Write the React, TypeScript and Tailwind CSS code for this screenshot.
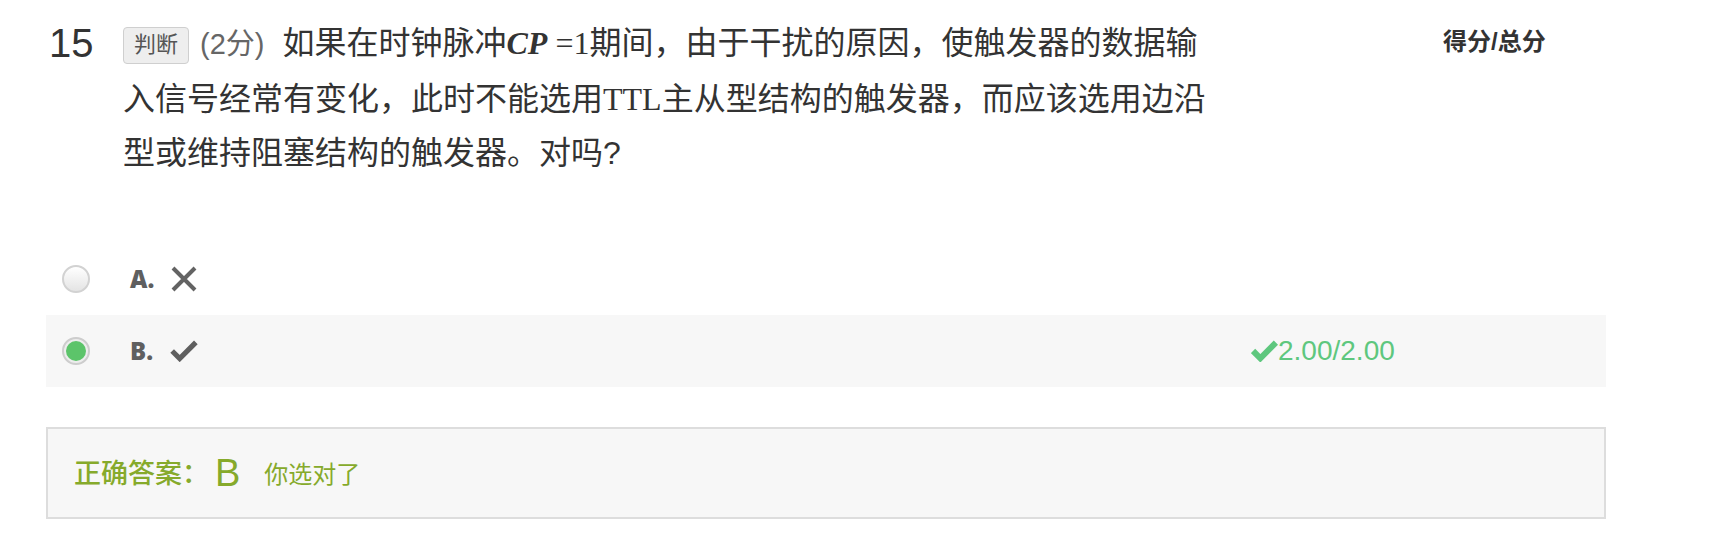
import React from "react";

const XMark = () => (
  <svg width="28" height="26" viewBox="0 0 28 26" fill="none">
    <path d="M3 2 L25 24 M25 2 L3 24" stroke="#636363" strokeWidth="4" />
  </svg>
);

const Check = ({ color, w, h, sw }: { color: string; w: number; h: number; sw: number }) => (
  <svg width={w} height={h} viewBox="0 0 26 20" fill="none">
    <polyline points="2,10 9,17 24,2" stroke={color} strokeWidth={sw} strokeLinejoin="miter" />
  </svg>
);

const Radio = ({ checked }: { checked?: boolean }) =>
  checked ? (
    <div className="w-[28px] h-[28px] rounded-full border-2 border-[#cdcdcd] bg-[#ededed] flex items-center justify-center">
      <div className="w-[20px] h-[20px] rounded-full bg-[#5cc46a]" />
    </div>
  ) : (
    <div className="w-[28px] h-[28px] rounded-full border-2 border-[#d2d2d2] bg-linear-to-b from-white to-[#e4e4e4]" />
  );

export default function App() {
  return (
    <div className="w-[1724px] h-[544px] bg-white pl-[46px] text-[#333] font-['Liberation_Sans','Noto_Sans_CJK_SC',sans-serif]">
      {/* question */}
      <div className="flex pt-[16px]">
        <div className="w-[77px] pl-[3px] text-[40px] leading-[54px] text-[#333]">15</div>
        <div className="w-[1100px] text-[32px] leading-[54.5px]">
          <span className="inline-block align-middle -mt-[1px] px-[10px] h-[37px] leading-[34px] text-[22px] text-[#555] bg-[#eeeeee] border border-[#cfcfcf] rounded-[4px]">
            判断
          </span>
          <span className="ml-[11px] text-[29px] text-[#666]">(2分)</span>
          <span className="ml-[18px]">
            如果在时钟脉冲
            <span className="font-['Liberation_Serif'] font-bold italic">CP</span>
            <span className="font-['Liberation_Serif']"> =1</span>
            期间，由于干扰的原因，使触发器的数据输入信号经常有变化，此时不能选用
            <span className="font-['Liberation_Serif']">TTL</span>
            主从型结构的触发器，而应该选用边沿型或维持阻塞结构的触发器。对吗?
          </span>
        </div>
        <div className="ml-[220px] text-[24px] leading-[52px] font-bold text-[#333]">得分/总分</div>
      </div>

      {/* options */}
      <div className="mt-[62px] w-[1560px]">
        <div className="flex items-center h-[72px]">
          <div className="pl-[16px] w-[84px]">
            <Radio />
          </div>
          <span className="w-[40px] text-[24px] font-extrabold text-[#5f5f5f] font-['Open_Sans',sans-serif]">A.</span>
          <XMark />
        </div>
        <div className="flex items-center h-[72px] bg-[#f7f7f7]">
          <div className="pl-[16px] w-[84px]">
            <Radio checked />
          </div>
          <span className="w-[40px] text-[24px] font-extrabold text-[#5f5f5f] font-['Open_Sans',sans-serif]">B.</span>
          <Check color="#5f5f5f" w={28} h={22} sw={4.8} />
          <div className="ml-auto w-[355px] flex items-center text-[28px] text-[#5ec77e]">
            <Check color="#5ec77e" w={27} h={22} sw={5.8} />
            <span>2.00/2.00</span>
          </div>
        </div>
      </div>

      {/* answer */}
      <div className="mt-[40px] w-[1560px] h-[92px] border-2 border-[#dddddd] bg-[#f7f7f7] flex items-center pl-[26px] text-[#86aa2b]">
        <span className="text-[27px] font-medium font-['Noto_Sans_CJK_SC',sans-serif]">正确答案：</span>
        <span className="ml-[6px] text-[38px] leading-none">B</span>
        <span className="ml-[24px] text-[24px] font-['Noto_Sans_CJK_SC',sans-serif]">你选对了</span>
      </div>
    </div>
  );
}
